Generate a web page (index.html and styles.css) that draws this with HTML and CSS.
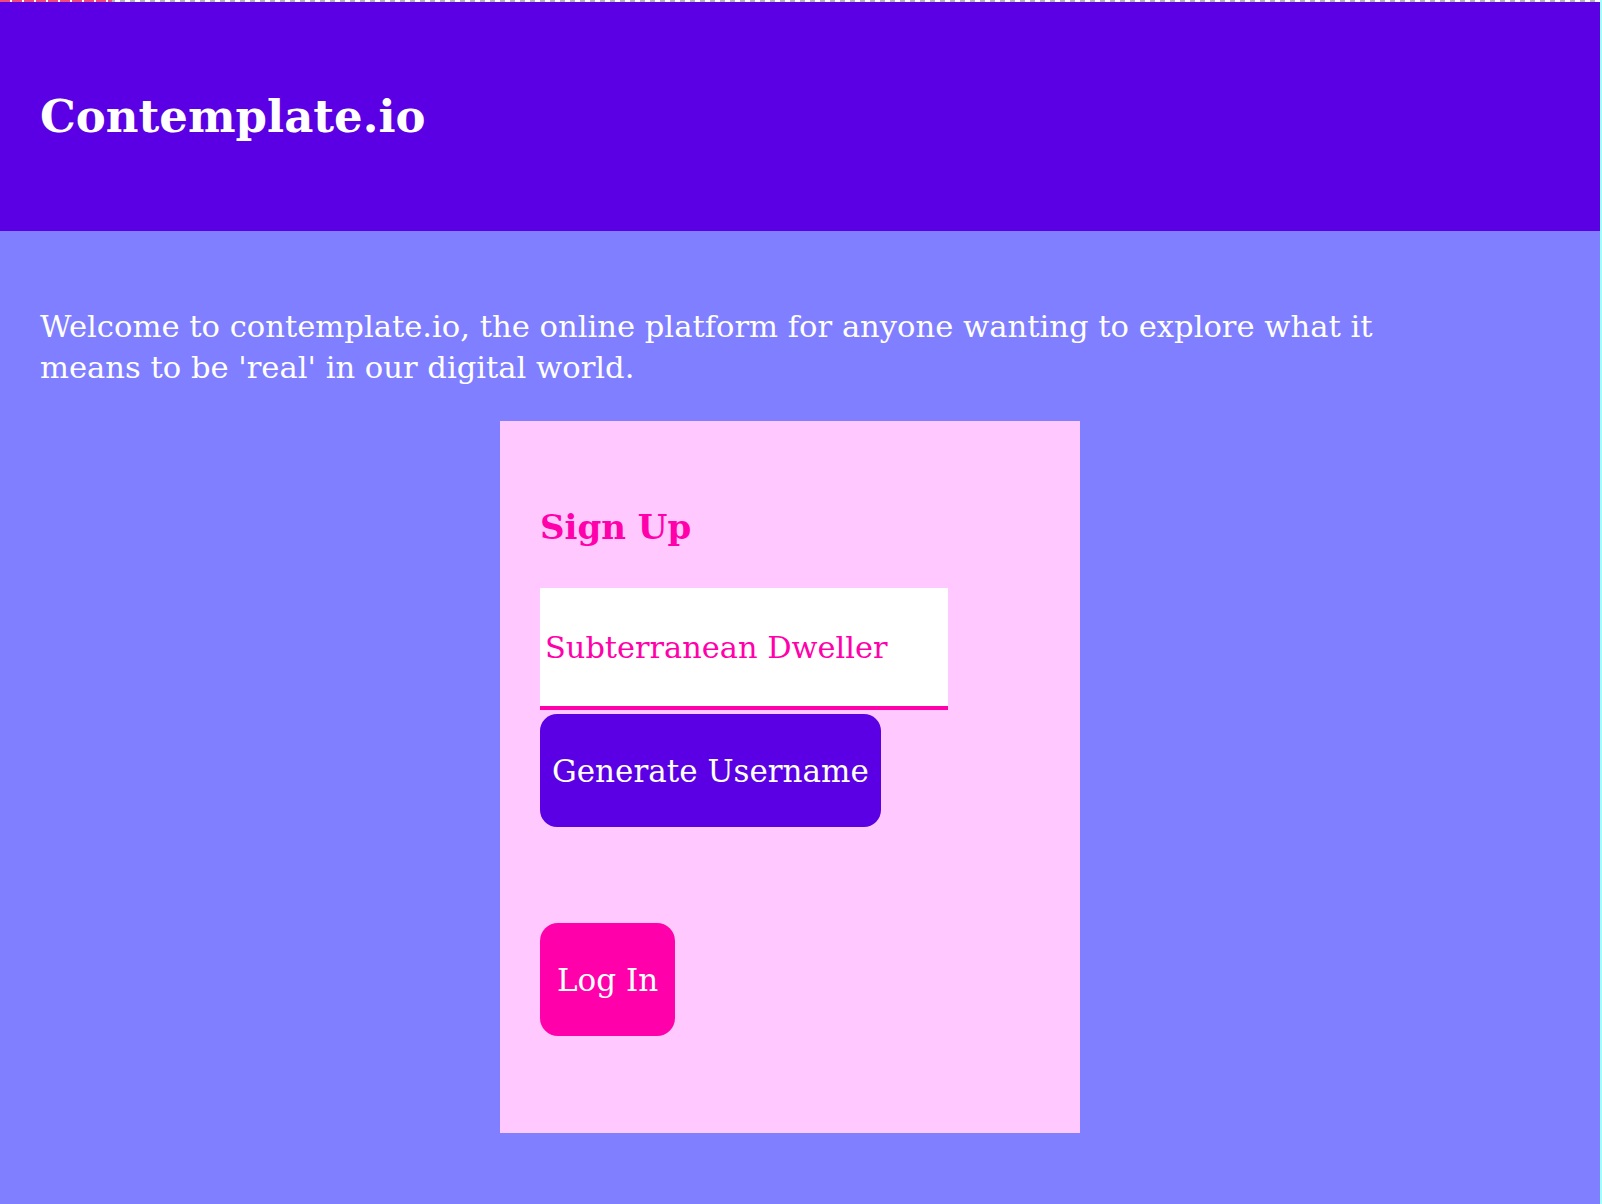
FILE: index.html
```html
<!DOCTYPE html>
<html lang="en">
<head>
<meta charset="utf-8">
<title>Contemplate.io</title>
<link rel="stylesheet" href="styles.css">
</head>
<body>
<div class="topbar"><span class="topbar-progress"></span></div>
<header class="header">
  <h1 class="title">Contemplate.io</h1>
</header>
<main class="main">
  <p class="intro">Welcome to contemplate.io, the online platform for anyone wanting to explore what it means to be 'real' in our digital world.</p>
  <section class="card">
    <h2 class="card-title">Sign Up</h2>
    <input class="username" type="text" value="Subterranean Dweller">
    <button class="btn btn-generate" type="button">Generate Username</button>
    <button class="btn btn-login" type="button">Log In</button>
  </section>
</main>
</body>
</html>
```

FILE: styles.css
```css
html, body {
  margin: 0;
  padding: 0;
}

body {
  background: #7f7fff;
  font-family: "DejaVu Serif", serif;
  width: 1600px;
  min-height: 1204px;
  border-right: 2px solid #a0ffff;
}

.topbar {
  height: 2px;
  display: flex;
  background: repeating-linear-gradient(90deg, #b3b3b3 0 5px, #ffffff 5px 10px);
}

.topbar-progress {
  width: 112px;
  background: repeating-linear-gradient(90deg, #f04a7a 0 10px, #ffffff 10px 12px);
}

.header {
  height: 229px;
  background: #5b00e4;
  display: flex;
  align-items: center;
  padding: 0 40px;
}

.title {
  margin: 0;
  font-size: 45px;
  line-height: 1;
  font-weight: bold;
  color: #ffffff;
}

.main {
  padding: 0 60px 0 40px;
}

.intro {
  margin: 75px 0 33px;
  max-width: 1400px;
  font-size: 30.6px;
  line-height: 41px;
  color: #ffffff;
}

.card {
  width: 580px;
  box-sizing: border-box;
  margin: 0 auto;
  background: #ffc9ff;
  padding: 89px 40px 97px;
  display: flex;
  flex-direction: column;
  align-items: flex-start;
}

.card-title {
  margin: 0 0 43px;
  font-size: 34px;
  line-height: 35px;
  font-weight: bold;
  color: #ff00aa;
}

.username {
  width: 408px;
  height: 122px;
  box-sizing: border-box;
  margin: 0;
  padding: 0 5px;
  border: none;
  border-bottom: 4px solid #ff00aa;
  background: #ffffff;
  font-family: "DejaVu Serif", serif;
  font-size: 30.4px;
  color: #ff00aa;
  outline: none;
}

.btn {
  margin: 0;
  border: none;
  font-family: "DejaVu Serif", serif;
  font-size: 31px;
  color: #ffffff;
  cursor: pointer;
}

.btn-generate {
  margin-top: 4px;
  height: 113px;
  padding: 0 12px;
  border-radius: 17px;
  background: #5b00e4;
}

.btn-login {
  margin-top: 96px;
  height: 113px;
  padding: 0 17px;
  border-radius: 18px;
  background: #ff00aa;
}
```
